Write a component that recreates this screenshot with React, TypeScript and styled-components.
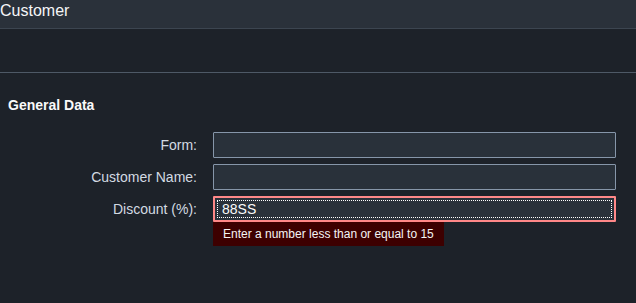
import React from "react";
import styled, { createGlobalStyle } from "styled-components";

const Global = createGlobalStyle`
  html, body { margin: 0; padding: 0; background: #1d2229; }
  body { font-family: "Liberation Sans", Arial, sans-serif; }
  * { box-sizing: border-box; }
`;

const Page = styled.div`
  width: 636px;
  height: 303px;
  background: #1d2229;
  display: flex;
  flex-direction: column;
  overflow: hidden;
`;

const Header = styled.header`
  height: 29px;
  flex: none;
  background: #2a313a;
  border-bottom: 1px solid #3c4550;
  color: #f5f6f7;
  font-size: 16px;
  line-height: 20px;
  padding-top: 1px;
  padding-left: 0;
`;

const SubHeader = styled.div`
  height: 44px;
  flex: none;
  border-bottom: 1px solid #4e5966;
`;

const Section = styled.section`
  padding: 24px 21px 0 8px;
  display: flex;
  flex-direction: column;
`;

const Title = styled.h2`
  margin: 0;
  font-size: 14px;
  line-height: 16px;
  font-weight: bold;
  color: #fafafa;
`;

const Form = styled.div`
  margin-top: 19px;
  margin-left: -8px;
  display: grid;
  grid-template-columns: 197px 403px;
  column-gap: 16px;
  row-gap: 6px;
  align-items: start;
`;

const Label = styled.label`
  height: 26px;
  display: flex;
  align-items: center;
  justify-content: flex-end;
  font-size: 14px;
  color: #d3dae2;
  white-space: nowrap;
`;

const FieldWrap = styled.div`
  display: flex;
  flex-direction: column;
  align-items: flex-start;
`;

const Input = styled.div<{ $invalid?: boolean }>`
  width: 100%;
  height: 26px;
  background: #29313a;
  border: ${(p) => (p.$invalid ? "2px solid #ff8888" : "1px solid #8696a9")};
  border-radius: 1px;
  display: flex;
  align-items: center;
  padding-left: ${(p) => (p.$invalid ? "7px" : "8px")};
  font-size: 14px;
  color: #fafafa;
  outline: ${(p) => (p.$invalid ? "1px dotted #ffffff" : "none")};
  outline-offset: -5px;
`;

const Message = styled.div`
  background: #3d0000;
  color: #f4f4f4;
  font-size: 12px;
  line-height: 14px;
  padding: 5px 10px 5px 10px;
  white-space: nowrap;
`;

export default function App() {
  return (
    <Page>
      <Global />
      <Header>Customer</Header>
      <SubHeader />
      <Section>
        <Title>General Data</Title>
        <Form>
          <Label>Form:</Label>
          <FieldWrap>
            <Input />
          </FieldWrap>
          <Label>Customer Name:</Label>
          <FieldWrap>
            <Input />
          </FieldWrap>
          <Label>Discount (%):</Label>
          <FieldWrap>
            <Input $invalid>88SS</Input>
            <Message>Enter a number less than or equal to 15</Message>
          </FieldWrap>
        </Form>
      </Section>
    </Page>
  );
}
